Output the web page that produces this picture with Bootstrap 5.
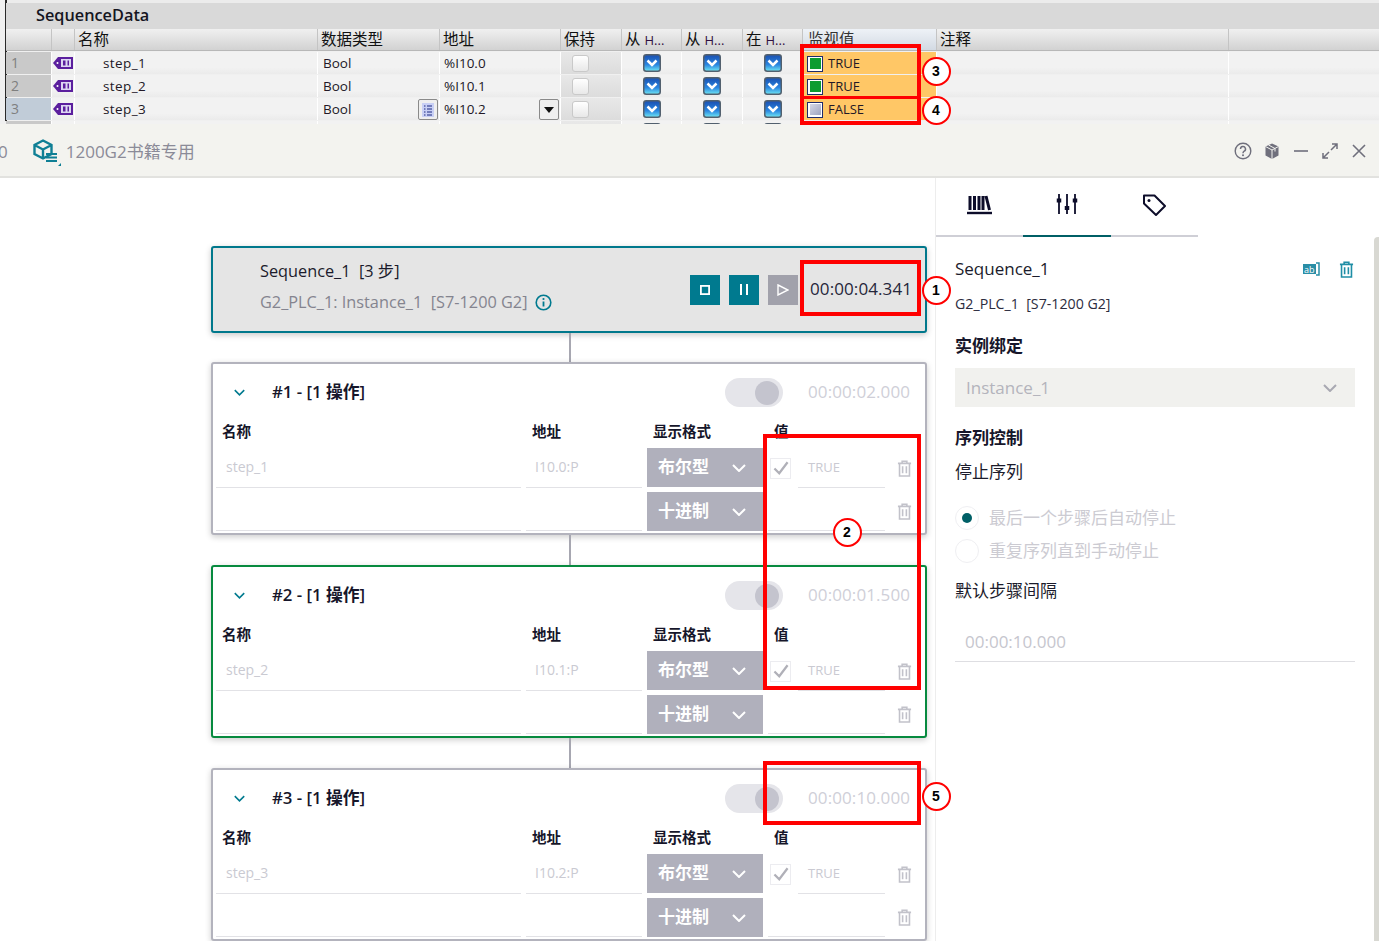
<!DOCTYPE html>
<html lang="zh-CN">
<head>
  <meta charset="UTF-8">
  <meta name="viewport" content="width=device-width, initial-scale=1.0">
  <title>SequenceData</title>
  <link href="https://cdn.jsdelivr.net/npm/bootstrap@5.3.0/dist/css/bootstrap.min.css" rel="stylesheet">
  <style>
    html, body { height: 941px; overflow: hidden; }
    body { position: relative; background: #fff; color: #1b1b2b; font-family: "Open Sans", "Noto Sans CJK SC", sans-serif; font-size: 16px; line-height: 1.2; }
    svg { display: block; flex: none; }

    /* watch table */
    .tia-panel { height: 124px; overflow: hidden; background: #f0f0f0; }
    .tia-strip { height: 3px; margin-left: 6px; background: #ececec; }
    .tia-frame { margin-left: 5px; border-left: 2px solid #2a2a2a; height: 121px; margin-top: -3px; padding-top: 3px; }
    .tia-title { height: 26px; margin-left: -1px; padding-left: 30px; background: #d9d9d9; font-size: 16.300px; font-weight: 600; line-height: 25px; color: #15151f; }
    .tia-row { display: grid; grid-template-columns: 45px 22px 242px 121px 120px 60px 59px 60px 59px 133px 291px 1fr; column-gap: 1px; margin-left: -1px; background: #fff; }
    .tia-head { height: 22px; background: #c4c4c4; border-bottom: 1px solid #b8b8b8; margin-bottom: 1px; }
    .tia-head > div { background: linear-gradient(#f0f0f0, #d2d2d2); padding-left: 3px; font-size: 15.500px; line-height: 20px; color: #111; white-space: nowrap; overflow: hidden; }
    .tia-head .tia-latin { font-size: 13px; color: #311042; }
    .tia-head > .tia-watch { background: linear-gradient(#eef2f7, #d3dae3); color: #333; padding-left: 5px; }
    .tia-body { height: 22px; margin-bottom: 1px; }
    .tia-body > div { position: relative; display: flex; align-items: center; background: linear-gradient(#f2f2f2 70%, #ebebeb); font-size: 13.500px; color: #221826; padding-left: 5px; }
    .tia-body > .tia-num { background: #c9c9c9; color: #7f7f7f; font-size: 14px; padding-left: 5px; }
    .tia-body > .tia-num-on { background: #c1ccd8; }
    .tia-body > .tia-ico { padding-left: 1px; }
    .tia-body > .tia-name { padding-left: 28px; letter-spacing: .4px; }
    .tia-body > .tia-addr { padding-left: 4px; }
    .tia-body > .tia-center { justify-content: center; padding-left: 0; }
    .tia-body > .tia-hold { background: linear-gradient(#e8e8e8, #dcdcdc); padding-left: 11px; }
    .tia-body > .tia-mon { background: #ffc766; padding: 1px 0 0 4px; gap: 5px; font-size: 13px; }
    .tia-box { width: 16px; height: 16px; border: 1.500px solid #1f2a6b; padding: 1.500px; background: #fff; }
    .tia-box > i { display: block; width: 100%; height: 100%; background: #0c9c30; }
    .tia-box-off > i { background: linear-gradient(135deg, #d6d8e6, #9ea3c0); }
    .tia-hold-box { width: 17px; height: 17px; border: 1px solid #c9c9c9; border-radius: 3px; background: linear-gradient(#fff, #e8e8e8); }
    .tia-tool { position: absolute; top: 1px; right: 1px; width: 20px; height: 21px; border: 1px solid #8a8a8a; border-radius: 2px; background: #efefef; display: flex; align-items: center; justify-content: center; }

    /* title bar */
    .prj-bar { height: 54px; background: #f3f3ef; border-bottom: 2px solid #e2e2df; }
    .prj-left { padding-top: 4px; margin-left: -2px; }
    .prj-name { font-size: 17px; color: #8b8b98; }
    .prj-icon { margin: 0 4px 0 24px; }
    .prj-tools { gap: 11px; padding: 2px 11px 0 0; }

    /* canvas */
    .work-area { height: 763px; }
    .seq-canvas { width: 936px; padding: 68px 0 0 211px; border-right: 1px solid #ededed; }
    .seq-col { width: 716px; }
    .seq-link { width: 2px; height: 30px; margin-left: 358px; background: #a7a7b1; flex: none; }
    .seq-link-first { height: 29px; }
    .seq-head { height: 87px; border: 2px solid #00788c; border-radius: 3px; background: #e5e5e5; box-shadow: 0 2px 6px rgba(0,0,0,.22); padding-left: 47px; padding-right: 12px; flex: none; }
    .seq-text { padding-bottom: 4px; font-size: 16.300px; }
    .seq-sub { color: #84848f; margin-top: 11px; }
    .seq-btns { gap: 9px; }
    .seq-btn { width: 30px; height: 30px; padding: 0; border: 0; border-radius: 0; background: #007a8f; display: flex; align-items: center; justify-content: center; }
    .seq-btn-off { background: #a1a1ab; }
    .time-on { font-size: 17px; letter-spacing: .1px; color: #26263a; width: 103px; margin-left: 3px; white-space: nowrap; }
    .time-off { font-size: 17px; letter-spacing: .1px; color: #cfcfd8; width: 103px; white-space: nowrap; }

    .step-box { height: 173px; border: 2px solid #b3b3bd; border-radius: 3px; background: #fff; box-shadow: 0 2px 6px rgba(0,0,0,.2); flex: none; }
    .step-box-run { border-color: #078a3f; }
    .step-top { height: 57px; padding-left: 21px; padding-right: 14px; }
    .step-chev { color: #007a8f; }
    .step-title { font-size: 16.800px; font-weight: 600; color: #16162a; margin-left: 27px; }
    .step-switch { width: 58px; height: 29px; border-radius: 15px; background: #e5e5ea; display: flex; align-items: center; justify-content: flex-end; padding-right: 4px; margin-right: 25px; }
    .step-switch > i { display: block; width: 24px; height: 24px; border-radius: 50%; background: #c4c4ce; }
    .step-grid { display: grid; grid-template-columns: 305px 116px 116px 117px 28px; grid-template-rows: 27px 40px 43px; column-gap: 5px; padding-left: 3px; }
    .step-label { padding: 1px 0 0 6px; font-size: 14.500px; font-weight: 700; color: #16162a; line-height: 20px; }
    .step-cell { height: 40px; border-bottom: 1px solid #e2e2e6; display: flex; align-items: center; padding-left: 10px; font-size: 14px; color: #cacad2; }
    .step-cell-addr { padding-left: 9px; }
    .step-fmt { height: 39px; background: #b0b0bc; color: #fff; font-size: 17px; font-weight: 700; display: flex; align-items: center; justify-content: space-between; padding: 0 17px 0 11px; }
    .step-val { height: 40px; display: flex; align-items: center; }
    .step-check { width: 21px; height: 21px; margin-left: 2px; margin-right: 7px; border: 1px solid #ececf0; display: flex; align-items: center; justify-content: center; }
    .step-true { flex: 1; height: 100%; border-bottom: 1px solid #e2e2e6; padding-left: 10px; display: flex; align-items: center; font-size: 13px; color: #cacad2; }
    .step-trash { height: 40px; display: flex; align-items: center; justify-content: center; color: #c2c2ca; }
    .step-grid > .step-r2 { margin-top: 4px; height: 39px; }

    /* property panel */
    .prop-panel { width: 443px; position: relative; }
    .prop-tabs { width: 262px; height: 59px; border-bottom: 2px solid #cfcfd6; }
    .prop-tab { width: 87.500px; height: 59px; display: flex; align-items: center; justify-content: center; padding-bottom: 6px; }
    .prop-tab-on { border-bottom: 2px solid #005f66; }
    .prop-scroll { position: absolute; top: 59px; right: 0; bottom: 0; width: 5px; background: #d8d8d2; border-top-left-radius: 4px; }
    .prop-body { width: 400px; margin-left: 19px; font-size: 17px; }
    .prop-head { height: 28px; margin-top: 18px; }
    .prop-actions { gap: 17px; padding-right: 1px; }
    .prop-plc { font-size: 14.200px; color: #2c2c3e; margin-top: 12px; }
    .prop-bold { font-size: 17px; font-weight: 700; color: #16162a; }
    .prop-s1 { margin-top: 24px; }
    .prop-select { height: 39px; margin-top: 12px; background: #f1f1ee; color: #b4b4bc; padding: 0 18px 0 11px; font-size: 17px; }
    .prop-s2 { margin-top: 21px; }
    .prop-s3 { margin-top: 13px; }
    .prop-radio { width: 24px; height: 24px; border: 1px solid #efeff2; border-radius: 50%; display: flex; align-items: center; justify-content: center; margin-right: 10px; }
    .prop-radio > i { display: block; width: 10px; height: 10px; border-radius: 50%; background: #005f66; }
    .prop-opt { height: 33px; color: #cccbd2; }
    .prop-s4 { margin-top: 19px; }
    .prop-s5 { margin-top: 14px; }
    .prop-input { height: 40px; margin-top: 20px; padding: 2px 0 0 10px; border-bottom: 1px solid #dedee2; color: #c6c6ce; }

    /* callouts */
    .note-rect { position: absolute; border: 4px solid #f00; pointer-events: none; }
    .note-line { position: absolute; background: #f00; }
    .note-num { position: absolute; width: 29px; height: 29px; margin: -14.500px 0 0 -14.500px; border: 2px solid #f00; border-radius: 50%; background: #fff; color: #000; font-family: "Liberation Sans", sans-serif; font-size: 14px; font-weight: 700; display: flex; align-items: center; justify-content: center; }
  </style>
</head>
<body>
  <svg width="0" height="0" class="position-absolute">
    <symbol id="i-tag" viewBox="0 0 20 14"><path d="M0 7 5 1h15v12H5z" fill="#5b1f9e"/><rect x="8" y="3" width="10" height="8" fill="#dcd6f2"/><rect x="10" y="4.500" width="2.500" height="5" fill="#5b1f9e"/><rect x="14.500" y="4.500" width="1.500" height="5" fill="#5b1f9e"/><circle cx="4.500" cy="7" r="1" fill="#fff"/></symbol>
    <symbol id="i-on" viewBox="0 0 18 18"><rect x=".75" y=".75" width="16.500" height="16.500" rx="2.500" fill="url(#g-blue)" stroke="#52606e" stroke-width="1.500"/><path d="M4.500 6.500 9 11 13.500 6.500" fill="none" stroke="#fff" stroke-width="2.500"/><defs><linearGradient id="g-blue" x1="0" y1="0" x2="0" y2="1"><stop offset="0" stop-color="#1a4fb0"/><stop offset=".6" stop-color="#2a86e0"/><stop offset="1" stop-color="#70e8f4"/></linearGradient></defs></symbol>
    <symbol id="i-trash" viewBox="0 0 16 18"><path d="M1 3.500h14M5.500 3V1.200h5V3M2.700 3.500V17h10.600V3.500M6 6.500v7.500M10 6.500v7.500" fill="none" stroke="currentColor" stroke-width="1.700"/></symbol>
    <symbol id="i-chev" viewBox="0 0 14 8"><path d="M1 1l6 6 6-6" fill="none" stroke="currentColor" stroke-width="2"/></symbol>
    <symbol id="i-check" viewBox="0 0 18 16"><path d="M1.500 8.500 7 14 16.500 1.500" fill="none" stroke="#b0b0b8" stroke-width="2.600"/></symbol>
  </svg>

  <div class="tia-panel">
    <div class="tia-strip"></div>
    <div class="tia-frame">
      <div class="tia-title">SequenceData</div>
      <div class="tia-row tia-head">
        <div></div><div></div><div>名称</div><div>数据类型</div><div>地址</div><div>保持</div>
        <div>从 <span class="tia-latin">H...</span></div><div>从 <span class="tia-latin">H...</span></div><div>在 <span class="tia-latin">H...</span></div>
        <div class="tia-watch">监视值</div><div>注释</div><div></div>
      </div>
      <div class="tia-row tia-body">
        <div class="tia-num">1</div><div class="tia-ico"><svg width="20" height="14"><use href="#i-tag"/></svg></div><div class="tia-name">step_1</div><div>Bool</div><div class="tia-addr">%I10.0</div>
        <div class="tia-hold"><span class="tia-hold-box"></span></div>
        <div class="tia-center"><svg width="18" height="18"><use href="#i-on"/></svg></div><div class="tia-center"><svg width="18" height="18"><use href="#i-on"/></svg></div><div class="tia-center"><svg width="18" height="18"><use href="#i-on"/></svg></div>
        <div class="tia-mon"><span class="tia-box"><i></i></span>TRUE</div><div></div><div></div>
      </div>
      <div class="tia-row tia-body">
        <div class="tia-num">2</div><div class="tia-ico"><svg width="20" height="14"><use href="#i-tag"/></svg></div><div class="tia-name">step_2</div><div>Bool</div><div class="tia-addr">%I10.1</div>
        <div class="tia-hold"><span class="tia-hold-box"></span></div>
        <div class="tia-center"><svg width="18" height="18"><use href="#i-on"/></svg></div><div class="tia-center"><svg width="18" height="18"><use href="#i-on"/></svg></div><div class="tia-center"><svg width="18" height="18"><use href="#i-on"/></svg></div>
        <div class="tia-mon"><span class="tia-box"><i></i></span>TRUE</div><div></div><div></div>
      </div>
      <div class="tia-row tia-body">
        <div class="tia-num tia-num-on">3</div><div class="tia-ico"><svg width="20" height="14"><use href="#i-tag"/></svg></div><div class="tia-name">step_3</div>
        <div>Bool<span class="tia-tool"><svg width="12" height="14" viewBox="0 0 12 14"><rect width="12" height="14" fill="#c9d0f5"/><path d="M2 3h1.500M5 3h5M2 6h1.500M5 6h5M2 9h1.500M5 9h5M2 12h1.500M5 12h5" stroke="#1c2a80"/></svg></span></div>
        <div class="tia-addr">%I10.2<span class="tia-tool"><svg width="10" height="6" viewBox="0 0 10 6"><path d="M0 0h10L5 6z" fill="#111"/></svg></span></div>
        <div class="tia-hold"><span class="tia-hold-box"></span></div>
        <div class="tia-center"><svg width="18" height="18"><use href="#i-on"/></svg></div><div class="tia-center"><svg width="18" height="18"><use href="#i-on"/></svg></div><div class="tia-center"><svg width="18" height="18"><use href="#i-on"/></svg></div>
        <div class="tia-mon"><span class="tia-box tia-box-off"><i></i></span>FALSE</div><div></div><div></div>
      </div>
      <div class="tia-row tia-body">
        <div class="tia-num"></div><div></div><div></div><div></div><div></div>
        <div class="tia-hold"><span class="tia-hold-box"></span></div>
        <div class="tia-center"><svg width="18" height="18"><use href="#i-on"/></svg></div><div class="tia-center"><svg width="18" height="18"><use href="#i-on"/></svg></div><div class="tia-center"><svg width="18" height="18"><use href="#i-on"/></svg></div>
        <div></div><div></div><div></div>
      </div>
    </div>
  </div>

  <div class="prj-bar d-flex align-items-center justify-content-between">
    <div class="d-flex align-items-center prj-left">
      <span class="prj-name">0</span>
      <svg class="prj-icon" width="30" height="30" viewBox="0 0 30 30"><path d="M11 3.500 19.500 8v9L11 21.500 2.500 17V8zM2.500 8 11 12.500 19.500 8M11 12.500v9" fill="none" stroke="#0f7f95" stroke-width="2.400"/><path d="M14 17h11M14 20.500h11M14 24h11" stroke="#0f7f95" stroke-width="2.200"/><path d="M29 26v3h-3z" fill="#0f7f95"/></svg>
      <span class="prj-name">1200G2书籍专用</span>
    </div>
    <div class="d-flex align-items-center prj-tools">
      <svg width="18" height="18" viewBox="0 0 18 18"><circle cx="9" cy="9" r="7.800" fill="none" stroke="#6f6f7c" stroke-width="1.400"/><path d="M6.500 7a2.500 2.500 0 1 1 3.700 2.200c-.8.500-1.200 1-1.200 2" fill="none" stroke="#6f6f7c" stroke-width="1.500"/><circle cx="9" cy="13.300" r="1" fill="#6f6f7c"/></svg>
      <svg width="18" height="18" viewBox="0 0 18 18"><path d="M9 1.500 15.500 4.500v9L9 17l-6.500-3.500v-9z" fill="#6f6f7c"/><path d="M2.500 4.500 9 8l6.500-3.500M9 8v9M5.500 3l6.500 3.500v3" fill="none" stroke="#f3f3ef"/></svg>
      <svg width="18" height="18" viewBox="0 0 18 18"><path d="M2 9h14" stroke="#6f6f7c" stroke-width="1.600"/></svg>
      <svg width="18" height="18" viewBox="0 0 18 18"><path d="M10 8l6-6M11 2h5v5M8 10l-6 6M2 11v5h5" fill="none" stroke="#6f6f7c" stroke-width="1.500"/></svg>
      <svg width="18" height="18" viewBox="0 0 18 18"><path d="M3 3l12 12M15 3 3 15" stroke="#6f6f7c" stroke-width="1.600"/></svg>
    </div>
  </div>

  <div class="work-area d-flex">
    <div class="seq-canvas">
      <div class="seq-col d-flex flex-column">
        <div class="seq-head d-flex align-items-center justify-content-between">
          <div class="seq-text">
            <div>Sequence_1&nbsp; [3 步]</div>
            <div class="seq-sub d-flex align-items-center gap-2">G2_PLC_1: Instance_1&nbsp; [S7-1200 G2]
              <svg width="17" height="17" viewBox="0 0 17 17"><circle cx="8.500" cy="8.500" r="7.300" fill="none" stroke="#007a8f" stroke-width="1.600"/><path d="M8.500 7.500v5" stroke="#007a8f" stroke-width="1.800"/><circle cx="8.500" cy="5" r="1.100" fill="#007a8f"/></svg>
            </div>
          </div>
          <div class="d-flex align-items-center seq-btns">
            <button class="seq-btn" type="button"><svg width="10" height="10" viewBox="0 0 10 10"><rect x=".9" y=".9" width="8.200" height="8.200" fill="none" stroke="#fff" stroke-width="1.800"/></svg></button>
            <button class="seq-btn" type="button"><svg width="10" height="11" viewBox="0 0 10 11"><path d="M2 0v11M8 0v11" stroke="#fff" stroke-width="2"/></svg></button>
            <button class="seq-btn seq-btn-off" type="button"><svg width="12" height="12" viewBox="0 0 12 12"><path d="M1 1l10 5-10 5z" fill="none" stroke="#fff" stroke-width="1.400"/></svg></button>
            <span class="time-on">00:00:04.341</span>
          </div>
        </div>
        <div class="seq-link seq-link-first"></div>

        <div class="step-box">
          <div class="step-top d-flex align-items-center">
            <svg class="step-chev" width="11" height="7"><use href="#i-chev"/></svg>
            <span class="step-title flex-grow-1">#1 - [1 操作]</span>
            <span class="step-switch"><i></i></span>
            <span class="time-off">00:00:02.000</span>
          </div>
          <div class="step-grid">
            <div class="step-label">名称</div><div class="step-label">地址</div><div class="step-label">显示格式</div><div class="step-label">值</div><div></div>
            <div class="step-cell">step_1</div><div class="step-cell step-cell-addr">I10.0:P</div>
            <div class="step-fmt">布尔型<svg width="14" height="8"><use href="#i-chev"/></svg></div>
            <div class="step-val"><span class="step-check"><svg width="16" height="14"><use href="#i-check"/></svg></span><span class="step-true">TRUE</span></div>
            <div class="step-trash"><svg width="15" height="17"><use href="#i-trash"/></svg></div>
            <div class="step-cell step-r2"></div><div class="step-cell step-r2"></div>
            <div class="step-fmt step-r2">十进制<svg width="14" height="8"><use href="#i-chev"/></svg></div>
            <div class="step-cell step-r2"></div>
            <div class="step-trash step-r2"><svg width="15" height="17"><use href="#i-trash"/></svg></div>
          </div>
        </div>
        <div class="seq-link"></div>

        <div class="step-box step-box-run">
          <div class="step-top d-flex align-items-center">
            <svg class="step-chev" width="11" height="7"><use href="#i-chev"/></svg>
            <span class="step-title flex-grow-1">#2 - [1 操作]</span>
            <span class="step-switch"><i></i></span>
            <span class="time-off">00:00:01.500</span>
          </div>
          <div class="step-grid">
            <div class="step-label">名称</div><div class="step-label">地址</div><div class="step-label">显示格式</div><div class="step-label">值</div><div></div>
            <div class="step-cell">step_2</div><div class="step-cell step-cell-addr">I10.1:P</div>
            <div class="step-fmt">布尔型<svg width="14" height="8"><use href="#i-chev"/></svg></div>
            <div class="step-val"><span class="step-check"><svg width="16" height="14"><use href="#i-check"/></svg></span><span class="step-true">TRUE</span></div>
            <div class="step-trash"><svg width="15" height="17"><use href="#i-trash"/></svg></div>
            <div class="step-cell step-r2"></div><div class="step-cell step-r2"></div>
            <div class="step-fmt step-r2">十进制<svg width="14" height="8"><use href="#i-chev"/></svg></div>
            <div class="step-cell step-r2"></div>
            <div class="step-trash step-r2"><svg width="15" height="17"><use href="#i-trash"/></svg></div>
          </div>
        </div>
        <div class="seq-link"></div>

        <div class="step-box">
          <div class="step-top d-flex align-items-center">
            <svg class="step-chev" width="11" height="7"><use href="#i-chev"/></svg>
            <span class="step-title flex-grow-1">#3 - [1 操作]</span>
            <span class="step-switch"><i></i></span>
            <span class="time-off">00:00:10.000</span>
          </div>
          <div class="step-grid">
            <div class="step-label">名称</div><div class="step-label">地址</div><div class="step-label">显示格式</div><div class="step-label">值</div><div></div>
            <div class="step-cell">step_3</div><div class="step-cell step-cell-addr">I10.2:P</div>
            <div class="step-fmt">布尔型<svg width="14" height="8"><use href="#i-chev"/></svg></div>
            <div class="step-val"><span class="step-check"><svg width="16" height="14"><use href="#i-check"/></svg></span><span class="step-true">TRUE</span></div>
            <div class="step-trash"><svg width="15" height="17"><use href="#i-trash"/></svg></div>
            <div class="step-cell step-r2"></div><div class="step-cell step-r2"></div>
            <div class="step-fmt step-r2">十进制<svg width="14" height="8"><use href="#i-chev"/></svg></div>
            <div class="step-cell step-r2"></div>
            <div class="step-trash step-r2"><svg width="15" height="17"><use href="#i-trash"/></svg></div>
          </div>
        </div>
      </div>
    </div>

    <div class="prop-panel">
      <div class="prop-tabs d-flex">
        <div class="prop-tab"><svg width="25" height="20" viewBox="0 0 25 20"><path d="M3 1v14M7.500 1v14M12 1v14M16 1v14M19 1l3.500 14" stroke="#0d0d2a" stroke-width="3" fill="none"/><path d="M0 18h25" stroke="#0d0d2a" stroke-width="2.400"/></svg></div>
        <div class="prop-tab prop-tab-on"><svg width="22" height="22" viewBox="0 0 22 22"><path d="M3 1v20M11 1v20M19 1v20" stroke="#0d0d2a" stroke-width="1.800"/><path d="M3 5.500v4M11 13v4M19 5.500v4" stroke="#0d0d2a" stroke-width="4.500"/></svg></div>
        <div class="prop-tab"><svg width="24" height="24" viewBox="0 0 24 24"><path d="M2 2.500h10.500L23 13l-9 9L2 10.500z" fill="none" stroke="#0d0d2a" stroke-width="2" stroke-linejoin="round"/><circle cx="7" cy="7.500" r="1.500" fill="#0d0d2a"/></svg></div>
      </div>
      <div class="prop-scroll"></div>
      <div class="prop-body">
        <div class="prop-head d-flex justify-content-between align-items-center">
          <span>Sequence_1</span>
          <span class="d-flex align-items-center prop-actions">
            <svg width="19" height="14" viewBox="0 0 19 14"><rect y="2" width="13" height="10" fill="#2a8ea6"/><text x="1" y="10.500" fill="#fff" font-family="Open Sans, sans-serif" font-size="9">ab</text><path d="M13 1h3v12h-3" fill="none" stroke="#2a8ea6" stroke-width="1.500"/></svg>
            <svg width="15" height="17" class="prop-del"><use href="#i-trash" style="color:#1f8ea6"/></svg>
          </span>
        </div>
        <div class="prop-plc">G2_PLC_1&nbsp; [S7-1200 G2]</div>
        <div class="prop-bold prop-s1">实例绑定</div>
        <div class="prop-select d-flex align-items-center justify-content-between">Instance_1<svg width="14" height="8"><use href="#i-chev" style="color:#a9a9b2"/></svg></div>
        <div class="prop-bold prop-s2">序列控制</div>
        <div class="prop-s3">停止序列</div>
        <div class="prop-opt d-flex align-items-center prop-s4"><span class="prop-radio"><i></i></span>最后一个步骤后自动停止</div>
        <div class="prop-opt d-flex align-items-center"><span class="prop-radio"></span>重复序列直到手动停止</div>
        <div class="prop-s5">默认步骤间隔</div>
        <div class="prop-input d-flex align-items-center">00:00:10.000</div>
      </div>
    </div>
  </div>

  <div class="note-rect" style="left:800px;top:44px;width:121px;height:81px"></div>
  <div class="note-line" style="left:800px;top:96px;width:121px;height:3px"></div>
  <div class="note-rect" style="left:800px;top:260px;width:121px;height:56px"></div>
  <div class="note-rect" style="left:763px;top:434px;width:158px;height:256px"></div>
  <div class="note-rect" style="left:763px;top:761px;width:158px;height:64px"></div>
  <div class="note-num" style="left:936px;top:290px">1</div>
  <div class="note-num" style="left:847px;top:532px">2</div>
  <div class="note-num" style="left:936px;top:71px">3</div>
  <div class="note-num" style="left:936px;top:110px">4</div>
  <div class="note-num" style="left:936px;top:796px">5</div>
</body>
</html>
